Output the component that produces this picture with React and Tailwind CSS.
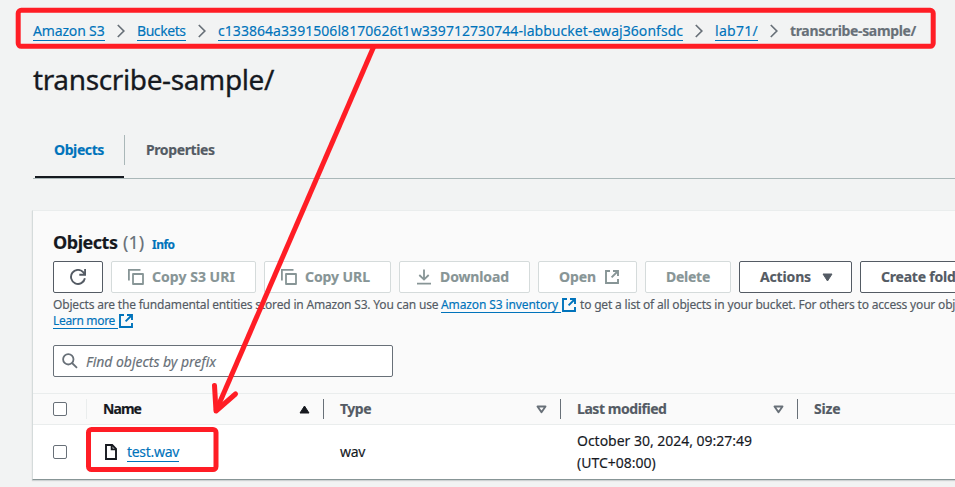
import React from "react";

const link = "border-b border-[#0073bb] text-[#0073bb]";

function Chevron() {
  return (
    <svg className="mx-[12px] mt-[1px] h-4 w-2 shrink-0" viewBox="0 0 8 16" fill="none" stroke="#687078" strokeWidth="1.7">
      <path d="M.8 3l6 6-6 6" />
    </svg>
  );
}

function Crumb({ width, className, children }) {
  return (
    <span className={`${width} h-[20px] shrink-0 leading-[19px] ${link} ${className}`}>{children}</span>
  );
}

function Copy() {
  return (
    <svg className="h-4 w-4 shrink-0" viewBox="0 0 16 16" fill="none" stroke="currentColor" strokeWidth="1.8">
      <path d="M.9 11.5V.9h11.6" />
      <path d="M5 5h10v10H5z" strokeLinejoin="round" />
    </svg>
  );
}

function External({ className }) {
  return (
    <svg className={`shrink-0 ${className}`} viewBox="0 0 14 14" fill="none" stroke="currentColor" strokeWidth="1.9">
      <path d="M5 1H1v12h12V9" />
      <path d="M8 1h5v5M13 1L6.6 7.4" />
    </svg>
  );
}

function Button({ width, disabled, pad, children }) {
  const tone = disabled ? "border-[#d5dbdb] text-[#879596]" : "border-[#545b64] text-[#545b64]";
  return (
    <div className={`${width} ${tone} ${pad} flex h-8 shrink-0 items-center rounded-[2px] border bg-white text-sm font-bold whitespace-nowrap`}>
      {children}
    </div>
  );
}

function Checkbox() {
  return <div className="h-[14px] w-[14px] shrink-0 rounded-[2px] border border-[#687078] bg-white" />;
}

function SortDown() {
  return (
    <svg className="h-[9px] w-[11px] shrink-0" viewBox="0 0 11 9" fill="none" stroke="#687078" strokeWidth="1.9" strokeLinejoin="round">
      <path d="M1.5 1.5h8l-4 5.7z" />
    </svg>
  );
}

export default function App() {
  return (
    <div className="relative h-[487px] w-[955px] overflow-hidden bg-[#f2f3f3] font-['Noto_Sans','Open_Sans',sans-serif] text-[#16191f] [-webkit-text-stroke-width:0.15px]">
      <nav className="flex h-[41px] items-start pt-[21px] pl-[33px] text-sm whitespace-nowrap">
        <Crumb width="w-[72px]" className="tracking-[-0.16px]">Amazon S3</Crumb>
        <Chevron />
        <Crumb width="w-[49px]" className="tracking-[-0.44px]">Buckets</Crumb>
        <Chevron />
        <Crumb width="w-[465px]" className="tracking-[0.05px]">c133864a3391506l8170626t1w339712730744-labbucket-ewaj36onfsdc</Crumb>
        <Chevron />
        <Crumb width="w-[43px]" className="tracking-[0.28px]">lab71/</Crumb>
        <Chevron />
        <span className="leading-[19px] font-bold tracking-[-0.34px] text-[#687078]">transcribe-sample/</span>
      </nav>

      <h1 className="mt-[20px] ml-[33px] h-9 text-[28px] leading-9 tracking-[-0.37px] [-webkit-text-stroke-width:0.3px]">transcribe-sample/</h1>

      <div className="mt-[38px] ml-[33px] flex h-[44px] border-b border-[#aab7b8] text-sm leading-[30px] font-bold">
        <div className="ml-[2px] h-[43px] w-[89px] border-b-2 border-[#16191f] pl-[19px] tracking-[-0.4px] text-[#0073bb]">Objects</div>
        <div className="h-[30px] border-l border-[#aab7b8] pl-[21px] tracking-[-0.4px] text-[#545b64]">Properties</div>
      </div>

      <section className="mt-[31px] ml-[32px] h-[270px] w-[960px] border border-t-[#eaeded] border-r-[#eaeded] border-b-[#879596] border-l-[#d5dbdb] bg-[#fafafa] shadow-[0_1px_1px_0_rgba(0,28,36,0.15)]">
        <div className="flex h-[50px] items-baseline pt-[19px] pl-[20px]">
          <h2 className="w-[70px] text-lg leading-6 font-bold tracking-[-0.48px]">Objects</h2>
          <span className="w-[29px] text-lg leading-6 text-[#687078]">(1)</span>
          <span className="text-xs font-bold tracking-[-0.53px] text-[#0073bb]">Info</span>
        </div>

        <div className="flex gap-2 pl-[20px]">
          <Button width="w-[50px]" pad="pl-4">
            <svg className="h-4 w-4" viewBox="0 0 16 16" fill="none" stroke="currentColor" strokeWidth="1.9">
              <path d="M14.9 9.2A7 7 0 1 1 13.4 3.4L15 5.6" />
              <path d="M15.1 0v5.7H9.3" />
            </svg>
          </Button>
          <Button width="w-[145px]" pad="pl-4" disabled>
            <Copy />
            <span className="ml-2 tracking-[0.04px]">Copy S3 URI</span>
          </Button>
          <Button width="w-[127px]" pad="pl-4" disabled>
            <Copy />
            <span className="ml-2 tracking-[-0.07px]">Copy URL</span>
          </Button>
          <Button width="w-[131px]" pad="pl-4" disabled>
            <svg className="h-4 w-4" viewBox="0 0 16 16" fill="none" stroke="currentColor" strokeWidth="1.8">
              <path d="M8 .5v9.8M3.3 6L8 10.6 12.7 6M1 14.6h14" />
            </svg>
            <span className="ml-2 tracking-[-0.12px]">Download</span>
          </Button>
          <Button width="w-[99px]" pad="pl-5" disabled>
            <span className="mr-[9px] tracking-[-0.09px]">Open</span>
            <External className="h-[14px] w-[14px]" />
          </Button>
          <Button width="w-[86px]" pad="pl-5" disabled>
            <span className="tracking-[-0.26px]">Delete</span>
          </Button>
          <Button width="w-[113px]" pad="pl-5">
            <span className="mr-[11px] tracking-[-0.15px]">Actions</span>
            <svg className="h-[9px] w-[11px]" viewBox="0 0 11 9">
              <path d="M1 1h9L5.5 8z" fill="currentColor" stroke="currentColor" strokeLinejoin="round" />
            </svg>
          </Button>
          <Button width="w-[132px]" pad="pl-5">
            <span className="tracking-[-0.22px]">Create folder</span>
          </Button>
        </div>

        <div className="mt-[4px] flex h-4 pl-[20px] text-xs leading-4 whitespace-pre text-[#545b64]">
          <span className="w-[388px] shrink-0 tracking-[-0.18px]">Objects are the fundamental entities stored in Amazon S3. You can use </span>
          <span className={`h-4 w-[120px] shrink-0 tracking-[-0.11px] ${link}`}>Amazon S3 inventory </span>
          <External className="mt-[1px] ml-[1px] h-[14px] w-[14px] text-[#0073bb]" />
          <span className="ml-[4px] tracking-[-0.18px]">to get a list of all objects in your bucket. For others to access your objects</span>
        </div>
        <div className="flex h-4 pl-[20px] text-xs leading-4 whitespace-pre">
          <span className={`h-4 w-[65px] shrink-0 tracking-[-0.32px] ${link}`}>Learn more </span>
          <External className="mt-[1px] ml-[1px] h-[14px] w-[14px] text-[#0073bb]" />
        </div>

        <div className="mt-[16px] ml-[20px] flex h-8 w-[340px] items-center rounded-[2px] border border-[#687078] bg-white pl-[8px]">
          <svg className="h-4 w-4" viewBox="0 0 16 16" fill="none" stroke="#687078" strokeWidth="1.8">
            <circle cx="6.3" cy="6.3" r="5.2" />
            <path d="M10 10l5 4.8" />
          </svg>
          <span className="mt-px ml-[8px] text-sm tracking-[-0.03px] text-[#687078] italic">Find objects by prefix</span>
        </div>

        <div className="mt-[16px] flex h-8 items-center border-y border-[#eaeded] pl-[20px] text-sm font-bold text-[#545b64]">
          <Checkbox />
          <div className="ml-[19px] flex h-5 w-[237px] items-center justify-between border-l border-[#eaeded] pr-[13px] pl-[16px]">
            <span className="tracking-[-0.94px] text-[#16191f]">Name</span>
            <svg className="h-[9px] w-[11px]" viewBox="0 0 11 9">
              <path d="M1 8h9L5.5 1z" fill="#16191f" stroke="#16191f" strokeLinejoin="round" />
            </svg>
          </div>
          <div className="flex h-5 w-[237px] items-center justify-between border-l border-[#687078] pr-[13px] pl-[16px]">
            <span className="tracking-[-0.5px]">Type</span>
            <SortDown />
          </div>
          <div className="flex h-5 w-[237px] items-center justify-between border-l border-[#687078] pr-[13px] pl-[16px]">
            <span className="tracking-[-0.44px]">Last modified</span>
            <SortDown />
          </div>
          <div className="flex h-5 items-center border-l border-[#687078] pl-[16px]">
            <span className="tracking-[-0.16px]">Size</span>
          </div>
        </div>

        <div className="flex h-[54px] items-center bg-white pl-[20px] text-sm leading-[22px]">
          <Checkbox />
          <div className="flex w-[273px] items-center pl-[38px]">
            <svg className="h-4 w-3" viewBox="0 0 12 16" fill="none" stroke="#16191f" strokeWidth="1.9">
              <path d="M1 1h6.2L11 4.8V15H1z" />
              <path d="M6.7 1v4.4H11" />
            </svg>
            <span className={`ml-[10px] h-[20px] w-[52px] leading-[19px] tracking-[-0.3px] ${link}`}>test.wav</span>
          </div>
          <div className="w-[237px] tracking-[-0.32px]">wav</div>
          <div className="whitespace-nowrap">
            <div className="tracking-[-0.02px]">October 30, 2024, 09:27:49</div>
            <div>(UTC+08:00)</div>
          </div>
        </div>
      </section>

      <svg className="absolute inset-0 h-[487px] w-[955px]" viewBox="0 0 955 487" fill="none" stroke="#ff1d25" strokeWidth="5">
        <rect x="18.2" y="10.3" width="915" height="36" rx="3" />
        <rect x="88.5" y="429.5" width="127.5" height="40" rx="3" />
        <path d="M374 46L216 411" />
        <path d="M214.5 385.5L216 411L235.5 394" strokeLinecap="round" strokeLinejoin="round" />
      </svg>
    </div>
  );
}
